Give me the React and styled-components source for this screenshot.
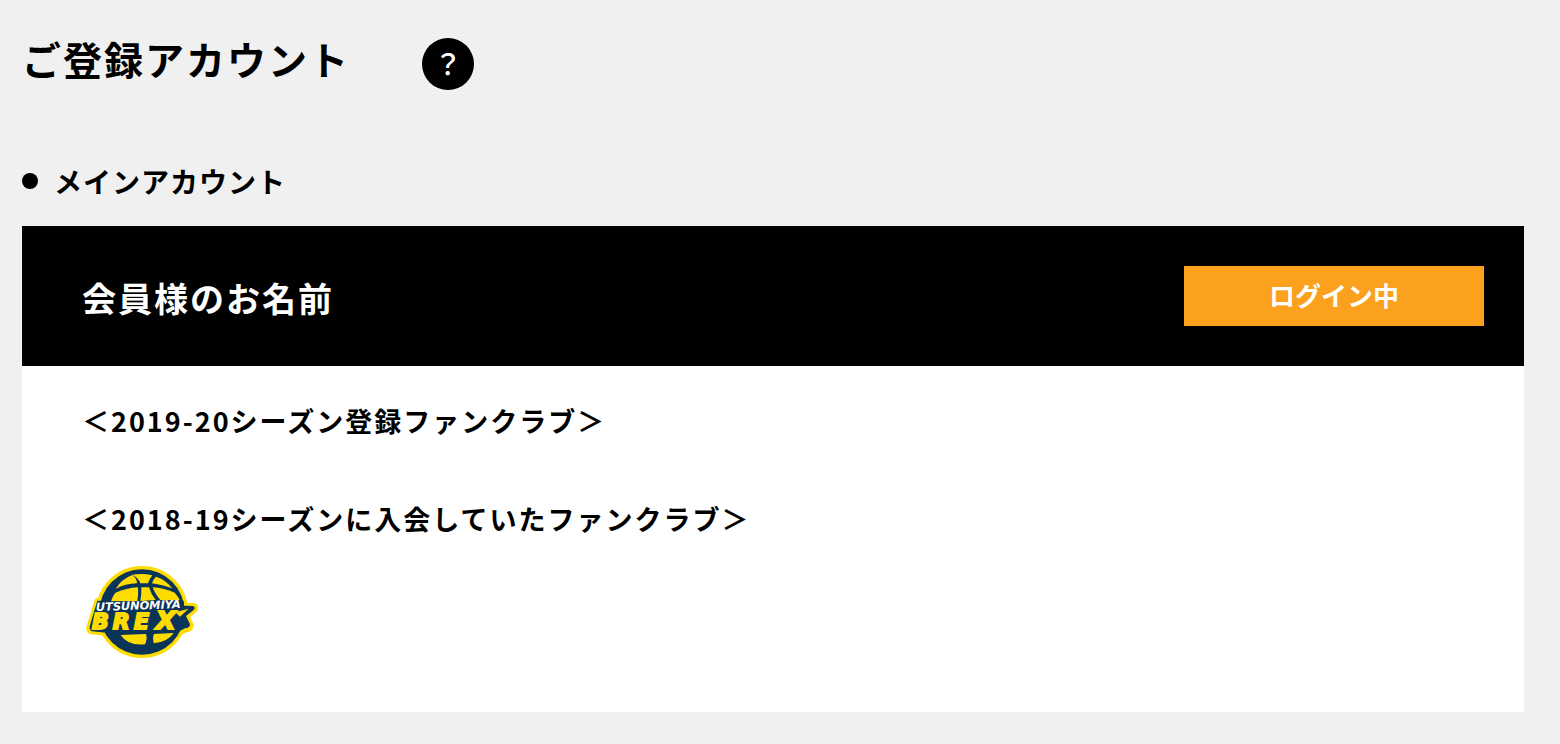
import React from 'react'
import styled, { createGlobalStyle } from 'styled-components'

const GlobalStyle = createGlobalStyle`
  *{
    box-sizing: border-box;
  }

  body{
    margin: 0;
    background-color: #f0f0f0;
    color: #000;
    font-family: "Noto Sans CJK JP", sans-serif;
  }

  h1, h2, h3, p{
    margin: 0;
    font-weight: 700;
  }
`;

const Container = styled.main`
  padding: 30px 36px 32px 22px;
`;

const TitleRow = styled.div`
  display: flex;
  align-items: flex-end;
  gap: 72px;
`;

const Title = styled.h1`
  padding-bottom: 4px;
  font-size: 39px;
  line-height: 56px;
  letter-spacing: 2px;
`;

const HelpButton = styled.button`
  width: 52px;
  height: 52px;
  padding: 0 0 2px;
  border: 0;
  border-radius: 50%;
  background-color: #000;
  color: #fff;
  font-family: inherit;
  font-size: 28px;
  font-weight: 500;
  line-height: 48px;
  cursor: pointer;
`;

const SectionTitle = styled.h2`
  display: flex;
  align-items: center;
  gap: 16px;
  margin: 70px 0 24px;
  font-size: 28px;
  line-height: 42px;
  letter-spacing: 1px;

  &::before{
    content: '';
    width: 16px;
    height: 16px;
    border-radius: 50%;
    background-color: #000;
  }
`;

const Card = styled.section`
  background-color: #fff;
`;

const CardHeader = styled.header`
  display: flex;
  align-items: center;
  justify-content: space-between;
  padding: 40px 40px 40px 60px;
  background-color: #000;
  color: #fff;
`;

const MemberName = styled.h3`
  padding-top: 4px;
  font-size: 34px;
  line-height: 56px;
  letter-spacing: 2px;
`;

const StatusButton = styled.button`
  width: 300px;
  height: 60px;
  padding: 0 0 2px;
  border: 0;
  background-color: #fca11e;
  color: #fff;
  font-family: inherit;
  font-size: 26px;
  font-weight: 700;
  line-height: 56px;
`;

const CardBody = styled.div`
  display: flex;
  flex-direction: column;
  gap: 56px;
  padding: 34px 60px 52px;
`;

const SeasonTitle = styled.p`
  font-size: 27px;
  line-height: 42px;
  letter-spacing: 2px;
`;

const ClubList = styled.ul`
  display: flex;
  margin: 24px 0 0;
  padding: 0 2px;
  list-style: none;

  svg{
    display: block;
  }
`;

const BrexLogo = () => (
  <svg width="116" height="96" viewBox="24 24 348 288" role="img" aria-label="UTSUNOMIYA BREX">
    <g fill="#ffdc00" stroke="#ffdc00" strokeWidth="12" strokeLinejoin="round">
      <circle cx="198" cy="168" r="132" />
      <path d="M62 133 L325 133 L326 146 L356 148 Q364 152 358 162 L335 181 L347 207 Q346 222 332 222 L310 232 L90 233 L45 229 Q34 226 38 211Z" />
    </g>
    <g fill="#0b3558">
      <circle cx="198" cy="168" r="128" />
      <path d="M64 134 L323 134 L324 149 L351 150 Q360 153 353 162 L330 180 L342 205 Q342 216 327 217 L301 230 L92 230 L48 226 Q38 222 42 208Z" />
    </g>
    <g fill="#ffdc00">
      <path d="M119 99 Q136 69 169 57 Q184 69 183 82 Q147 83 119 99Z" />
      <path d="M168 56 Q201 51 229 58 Q219 70 216 82 L193 82 Q188 65 168 56Z" />
      <path d="M240 62 Q269 71 289 97 Q261 86 228 82 Q231 70 240 62Z" />
      <path d="M106 133 Q112 116 119 110 Q151 96 186 94 Q188 116 184 136 L106 136Z" />
      <path d="M196 94 L219 94 Q225 115 239 132 L193 136 Q197 115 196 94Z" />
      <path d="M230 94 Q264 96 296 110 Q309 125 312 134 L253 132 Q236 112 230 94Z" />
      <path d="M134 237 L210 234 Q215 250 207 265 Q155 270 134 237Z" />
      <path d="M234 234 L293 231 Q276 257 234 262 Q228 246 234 234Z" />
    </g>
    <path d="M63 138 L319 132 L310 162 L62 167Z" fill="#0b3558" />
    <g fontFamily="DejaVu Sans, sans-serif" fontWeight="700" fontStyle="italic">
      <text x="60" y="165" fontSize="34" fill="#fff" transform="rotate(-2 60 165)">UTSUNOMIYA</text>
      <g fill="#ffdc00" stroke="#ffdc00" strokeWidth="6">
        <text x="48" y="220" fontSize="66">B</text>
        <text x="110" y="220" fontSize="66">R</text>
        <text x="174" y="220" fontSize="66">E</text>
        <text x="240" y="220" fontSize="76">X</text>
      </g>
    </g>
    <path d="M298 169 L338 158 L312 182Z" fill="#ffdc00" />
  </svg>
);

const seasons = [
  { id: 1, title: '＜2019-20シーズン登録ファンクラブ＞', clubs: [] },
  { id: 2, title: '＜2018-19シーズンに入会していたファンクラブ＞', clubs: ['brex'] },
];

const App = () => {
  return (
    <>
      <GlobalStyle />
      <Container>
        <TitleRow>
          <Title>ご登録アカウント</Title>
          <HelpButton type="button">？</HelpButton>
        </TitleRow>
        <SectionTitle>メインアカウント</SectionTitle>
        <Card>
          <CardHeader>
            <MemberName>会員様のお名前</MemberName>
            <StatusButton type="button">ログイン中</StatusButton>
          </CardHeader>
          <CardBody>
            {seasons.map((item) => (
              <div key={item.id}>
                <SeasonTitle>{item.title}</SeasonTitle>
                {item.clubs.length > 0 && (
                  <ClubList>
                    {item.clubs.map((club) => (
                      <li key={club}><BrexLogo /></li>
                    ))}
                  </ClubList>
                )}
              </div>
            ))}
          </CardBody>
        </Card>
      </Container>
    </>
  )
}

export default App
